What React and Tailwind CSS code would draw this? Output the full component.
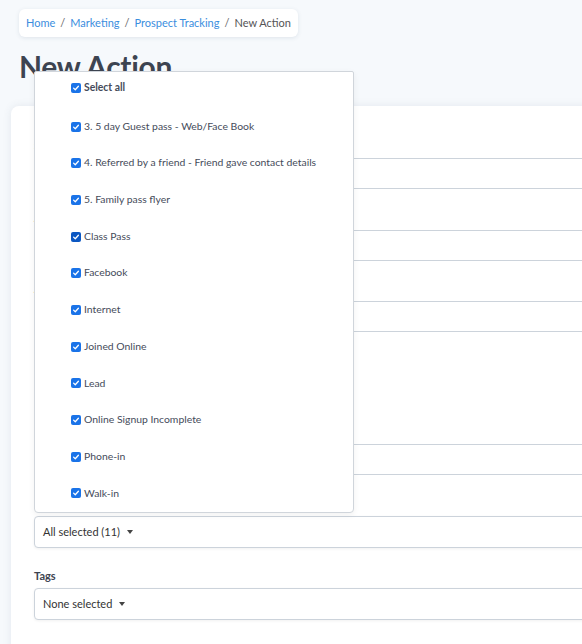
import React from "react";

const SOURCES = [
  "3. 5 day Guest pass - Web/Face Book",
  "4. Referred by a friend - Friend gave contact details",
  "5. Family pass flyer",
  "Class Pass",
  "Facebook",
  "Internet",
  "Joined Online",
  "Lead",
  "Online Signup Incomplete",
  "Phone-in",
  "Walk-in",
];

function Check({ dark }) {
  return (
    <span
      className={`flex h-[10px] w-[10px] shrink-0 items-center justify-center rounded-[2px] ${
        dark ? "bg-[#0b57c2]" : "bg-[#1a73e8]"
      }`}
    >
      <svg viewBox="0 0 10 10" className="h-[8px] w-[8px]" fill="none">
        <path d="M2 5.2 4.1 7.2 8 2.8" stroke="#fff" strokeWidth="1.6" strokeLinecap="round" strokeLinejoin="round" />
      </svg>
    </span>
  );
}

function Caret() {
  return <span className="ml-[7px] inline-block border-x-[3px] border-t-[4px] border-x-transparent border-t-[#444]" />;
}

function Field({ label, children }) {
  return (
    <div className="mb-[21.5px]">
      <label className="mb-[5px] block h-[14px] text-[11px] font-bold leading-[14px] text-[#3d4451]">{label}</label>
      {children}
    </div>
  );
}

const inputCls = "block h-[31px] w-full rounded-[4px] border border-[#ccd3db] bg-white";
const toggleCls =
  "flex h-[32px] w-full items-center rounded-[4px] border border-[#ccd3db] bg-white pl-[8px] text-[11px] text-[#333] shadow-[0_1px_3px_rgba(0,0,0,0.06)]";

export default function App() {
  return (
    <div className="relative h-[644px] w-full overflow-hidden bg-[#f6f9fc] font-['Lato',sans-serif]">
      <div className="pl-[19px] pt-[9px]">
        <nav className="inline-flex h-[28px] items-center gap-[5px] rounded-[6px] bg-white px-[7px] text-[11px] shadow-[0_1px_4px_rgba(60,80,110,0.12)]">
          <span className="text-[#3b8ede]">Home</span>
          <span className="text-[#666]">/</span>
          <span className="text-[#3b8ede]">Marketing</span>
          <span className="text-[#666]">/</span>
          <span className="text-[#3b8ede]">Prospect Tracking</span>
          <span className="text-[#666]">/</span>
          <span className="text-[#555]">New Action</span>
        </nav>
      </div>

      <h1 className="mt-[14px] pl-[19px] text-[30px] font-bold leading-none tracking-[-0.3px] text-[#3d4451]">
        New Action
      </h1>

      <div className="ml-[11px] mt-[25px] w-[640px] rounded-tl-[8px] bg-white px-[23px] pt-[33px] pb-10 shadow-[0_0_8px_rgba(60,80,110,0.10)]">
        <Field label="Subject">
          <div className={inputCls} />
        </Field>
        <Field label="Action Type">
          <div className={inputCls} />
        </Field>
        <Field label="Assigned To">
          <div className={inputCls} />
        </Field>
        <Field label="Due Date">
          <div className={`${inputCls} !w-[220px]`} />
        </Field>
        <Field label="Prospect">
          <div className={inputCls} />
        </Field>

        <Field label="Lead Source">
          <div className="relative">
            <button className={toggleCls}>
              All selected (11)
              <Caret />
            </button>

            {/* open multiselect menu, drops upward */}
            <div className="absolute bottom-full left-0 mb-[3px] w-[320px] rounded-b-[4px] rounded-t-[2px] border border-[#d0d5db] bg-white text-[10.4px] text-[#454b5a] shadow-[0_2px_6px_rgba(0,0,0,0.06)]">
              <div className="flex h-[36.7px] items-center gap-[3px] pb-[4px] pl-[36px]">
                <Check />
                <span className="font-bold">Select all</span>
              </div>
              {SOURCES.map((s) => (
                <div key={s} className="flex h-[36.7px] items-center gap-[3px] pl-[36px]">
                  <Check dark={s === "Class Pass"} />
                  <span>{s}</span>
                </div>
              ))}
            </div>
          </div>
        </Field>

        <Field label="Tags">
          <button className={toggleCls}>
            None selected
            <Caret />
          </button>
        </Field>
      </div>
    </div>
  );
}
